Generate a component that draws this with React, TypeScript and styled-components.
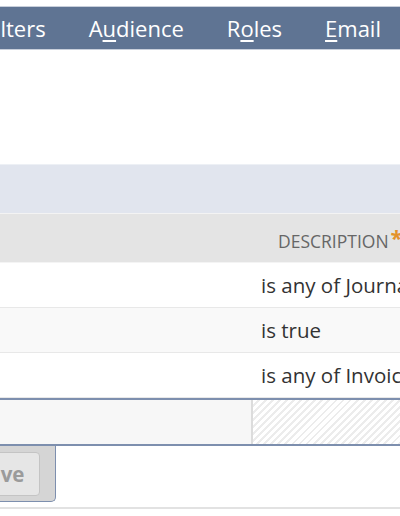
import React from "react";
import styled, { createGlobalStyle } from "styled-components";

const Global = createGlobalStyle`
  html, body { margin: 0; padding: 0; background: #fff; }
  body { font-family: "Open Sans", "Liberation Sans", sans-serif; overflow: hidden; }
`;

const Page = styled.div`
  width: 400px;
  height: 516px;
  overflow: hidden;
  padding-top: 6px;
  box-sizing: border-box;
`;

const TabBar = styled.div`
  height: 42px;
  background: #5f7493;
  border-top: 1px solid #c8cfdb;
  border-bottom: 1px solid #c8cfdb;
  display: flex;
  align-items: center;
  overflow: hidden;
`;

const TabList = styled.div`
  display: flex;
  margin-left: -38px;
  white-space: nowrap;
`;

const Tab = styled.div`
  padding: 0 21.5px;
  color: #fff;
  font-size: 22px;
  line-height: 44px;
  u { text-decoration-thickness: 1.5px; text-underline-offset: 3px; }
`;

const Blank = styled.div`
  height: 114px;
`;

const Band = styled.div`
  height: 49px;
  box-sizing: border-box;
  background: #e1e5ee;
  border-top: 1px solid #edf0f5;
`;

const Row = styled.div<{ $bg?: string; $h: number }>`
  display: grid;
  grid-template-columns: 251px 1fr;
  height: ${(p) => p.$h}px;
  background: ${(p) => p.$bg || "#fff"};
  border-bottom: 1px solid #e8e8e8;
  box-sizing: border-box;
`;

const HeaderRow = styled(Row)`
  background: #e4e4e4;
  border-top: 1px solid #f3f3f3;
  border-bottom: 1px solid #f4f4f4;
`;

const HeadCell = styled.div`
  grid-column: 2;
  display: flex;
  align-items: center;
  padding-left: 27px;
  padding-top: 6px;
  color: #666;
  font-size: 17.5px;
  white-space: nowrap;
`;

const Star = styled.span`
  color: #e3922a;
  font-weight: 700;
  font-size: 22px;
  margin-left: 2px;
  position: relative;
  top: -4px;
`;

const Cell = styled.div`
  grid-column: 2;
  display: flex;
  align-items: center;
  padding-left: 10px;
  color: #333;
  font-size: 20.5px;
  white-space: nowrap;
  overflow: hidden;
`;

const FootRow = styled.div`
  display: grid;
  grid-template-columns: 251px 2px 1fr;
  height: 48px;
  border-top: 2px solid #7d8fae;
  border-bottom: 2px solid #7d8fae;
  box-sizing: border-box;
`;

const FootLeft = styled.div`
  background: #f7f7f7;
`;

const FootDivider = styled.div`
  background: #dcdcdc;
`;

const FootRight = styled.div`
  background: repeating-linear-gradient(
    135deg,
    #ffffff 0px,
    #ffffff 3px,
    #ececec 3px,
    #ececec 5px
  );
`;

const ButtonArea = styled.div`
  height: 63px;
  border-bottom: 2px solid #e2e2e2;
  box-sizing: border-box;
  display: flex;
  align-items: flex-start;
`;

const ButtonTray = styled.div`
  margin-left: -46px;
  height: 56px;
  padding: 6px 15px 0 6px;
  box-sizing: border-box;
  background: #d5d5d5;
  border: 1px solid #7d8fae;
  border-top: none;
  border-bottom-right-radius: 5px;
`;

const Button = styled.button`
  height: 44px;
  padding: 0 15px;
  border: 1px solid #c4c4c4;
  border-radius: 4px;
  background: #e6e6e6;
  color: #9b9b9b;
  font-family: "Open Sans", "Liberation Sans", sans-serif;
  font-weight: 700;
  font-size: 20.5px;
`;

const rows = [
  { text: "is any of Journal", bg: "#fff" },
  { text: "is true", bg: "#f9f9f9" },
  { text: "is any of Invoice", bg: "#fff" },
];

export default function App() {
  return (
    <Page>
      <Global />
      <TabBar>
        <TabList>
          <Tab><u>F</u>ilters</Tab>
          <Tab>A<u>u</u>dience</Tab>
          <Tab>R<u>o</u>les</Tab>
          <Tab><u>E</u>mail</Tab>
        </TabList>
      </TabBar>
      <Blank />
      <Band />
      <HeaderRow $h={50}>
        <HeadCell>
          DESCRIPTION<Star>*</Star>
        </HeadCell>
      </HeaderRow>
      {rows.map((r, i) => (
        <Row key={i} $bg={r.bg} $h={45}>
          <Cell>{r.text}</Cell>
        </Row>
      ))}
      <FootRow>
        <FootLeft />
        <FootDivider />
        <FootRight />
      </FootRow>
      <ButtonArea>
        <ButtonTray>
          <Button>Save</Button>
        </ButtonTray>
      </ButtonArea>
    </Page>
  );
}
